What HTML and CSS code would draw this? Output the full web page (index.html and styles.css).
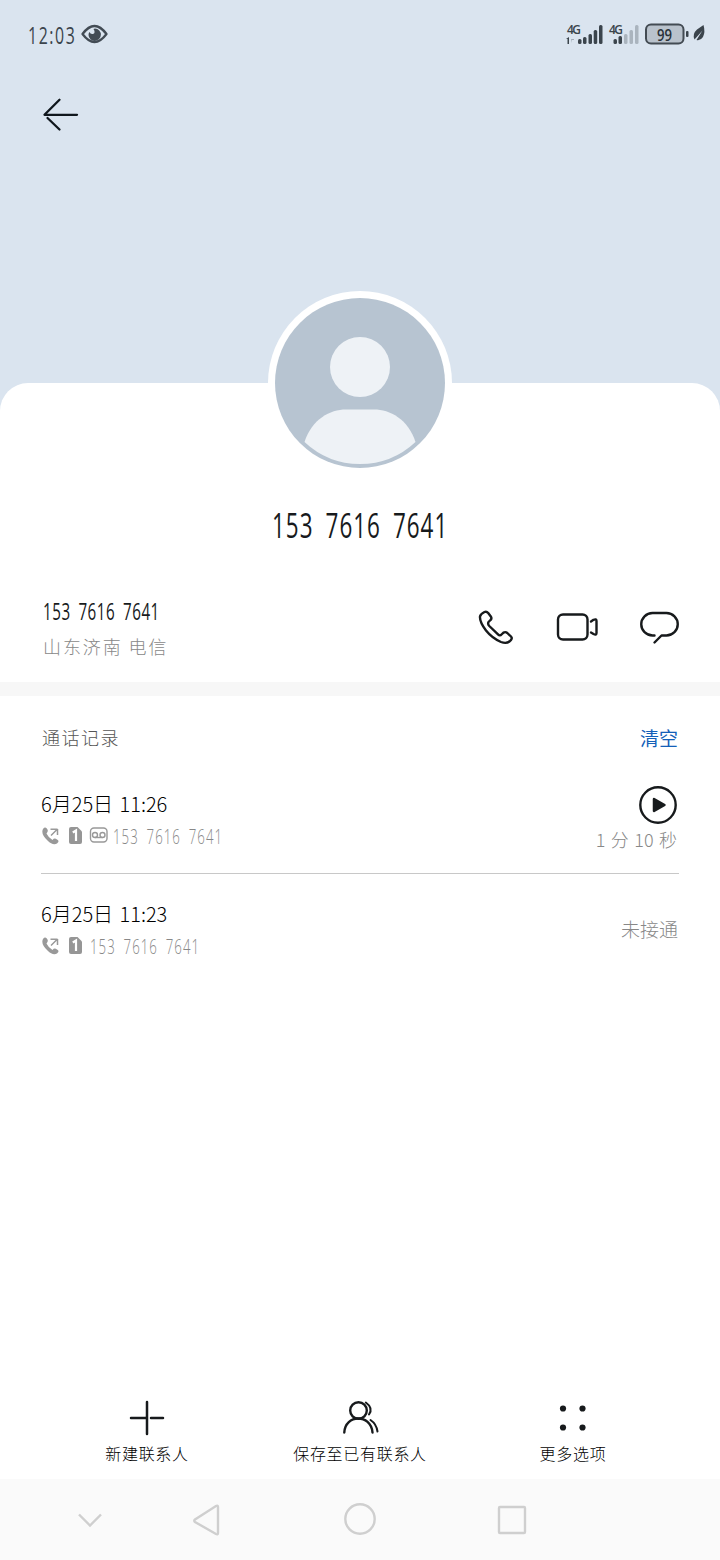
FILE: index.html
```html
<!DOCTYPE html>
<html lang="zh-CN">
<head>
<meta charset="utf-8">
<title>联系人</title>
<link rel="stylesheet" href="styles.css">
</head>
<body>
<div class="screen">
  <header class="hero">
    <div class="status">
      <div class="clock"><span class="digits">12:03</span></div>
      <svg class="eye" width="28" height="20" viewBox="0 0 28 20">
        <path d="M1.500 10Q13.500-6 25.500 10Q13.500 26 1.500 10Z" fill="none" stroke="#424b54" stroke-width="2.300" stroke-linejoin="round"/>
        <path d="M14 4.500a6.200 6.200 0 1 1-6.500 6.500q0-2 1-3q1 2.500 3.300 2Q15 9 12.500 4.900Z" fill="#424b54"/>
      </svg>
      <svg class="signals" width="144" height="28" viewBox="0 0 144 28">
        <g fill="#3b444c">
          <text x="2" y="14" class="network" textLength="14">4G</text>
          <path d="M1 19l3-2v7H2.500v-5z"/>
          <path d="M6 19h3v1H7v3z" opacity=".35"/>
          <rect x="13" y="19" width="3.500" height="5" rx="1.500"/>
          <rect x="18" y="17" width="3.500" height="7" rx="1.500"/>
          <rect x="23.500" y="14" width="3.500" height="10" rx="1.500"/>
          <rect x="28.700" y="10" width="3.500" height="14" rx="1.500"/>
          <rect x="34" y="5" width="3.500" height="19" rx="1.500"/>
          <text x="44" y="14" class="network" textLength="14">4G</text>
          <rect x="48.500" y="19" width="3.500" height="5" rx="1.500"/>
          <rect x="53.500" y="16" width="3.500" height="8" rx="1.500"/>
        </g>
        <g fill="#aab4be">
          <rect x="59" y="14" width="3.500" height="10" rx="1.500"/>
          <rect x="64.500" y="10" width="3.500" height="14" rx="1.500"/>
          <rect x="70" y="5" width="3.500" height="19" rx="1.500"/>
        </g>
        <rect x="81" y="4.500" width="37.500" height="19" rx="5" fill="#b9c2cc" stroke="#434b53" stroke-width="2"/>
        <text x="92" y="20.500" class="level" textLength="15" lengthAdjust="spacingAndGlyphs">99</text>
        <rect x="121" y="11" width="2.500" height="6" rx="1" fill="#3b444c"/>
        <path d="M138.500 5Q140.500 12 138 17Q135.500 21 131.500 20L137.500 10.500L129.500 19.500Q127 14 132 9.500ZM129 22l1-2" fill="#3b444c"/>
      </svg>
    </div>
    <svg class="back" width="40" height="36" viewBox="0 0 40 36">
      <path d="M18.500 2.800L3.500 17.800H36M6.500 21L18.500 32.500" fill="none" stroke="#10171d" stroke-width="2.300" stroke-linecap="round" stroke-linejoin="round"/>
    </svg>
  </header>

  <main class="sheet">
    <svg class="avatar" width="184" height="184" viewBox="0 0 184 184">
      <circle cx="92" cy="92" r="92" fill="#fff"/>
      <circle cx="92" cy="92" r="85" fill="#b7c4d1"/>
      <circle cx="92" cy="76" r="30" fill="#eef2f6"/>
      <path d="M36.500 151C44 128 62 118.500 78 118.500H106C122 118.500 140 128 147.500 151Q124 173 92 173T36.500 151Z" fill="#eef2f6"/>
    </svg>
    <h1 class="name"><span class="digits">153 7616 7641</span></h1>
    <section class="contact">
      <div class="contact-text">
        <div class="phone"><span class="digits">153 7616 7641</span></div>
        <div class="region">山东济南 电信</div>
      </div>
      <svg class="call" width="36" height="36" viewBox="0 0 36 36">
        <path d="M6.500 2Q8.500 1 10.200 3L13 6.700Q14 8.600 12.500 10L10.500 12Q9.500 14 11.300 16L20 24.300Q22 26.300 23.500 24.500L25.500 22.600Q27.500 21.500 29.300 23L33 26.500Q34.500 28 33 30Q29.500 34.500 23 32Q14 28 8 20.500Q1.500 12 2 6.500Q2.500 4 6.500 2Z"/>
      </svg>
      <svg class="video" width="44" height="36" viewBox="0 0 44 36">
        <rect x="3" y="5.500" width="29.500" height="25" rx="5"/>
        <path d="M36 12.500L38.500 10.800Q41.500 9.500 41.500 12V24Q41.500 26.500 38.500 25L36 23.500"/>
      </svg>
      <svg class="message" width="40" height="36" viewBox="0 0 40 36">
        <path d="M15.500 26.500H13.500A11.200 11.200 0 0 1 13.500 4H27.500A11.200 11.200 0 0 1 27.500 26.500H22.500L15.500 33.500"/>
      </svg>
    </section>
    <div class="divider"></div>
    <section class="log">
      <div class="log-head"><h2>通话记录</h2><a class="clear">清空</a></div>
      <article class="entry first">
        <div class="entry-main">
          <div class="date">6月25日 11:26</div>
          <div class="meta">
            <svg class="outgoing" width="20" height="20" viewBox="0 0 20 20"><path d="M2 3Q4.500 0 6.500 3.500Q7.500 5.500 5.500 7.500Q7 11 11.500 14Q13.500 11.500 16 13.500Q19 15 16 17.500Q12 20 6.500 14.500Q-.5 8 2 3Z" fill="#999"/><path d="M10 9.500L16.500 3M9.500 3.200H16.500M16.500 3V9" fill="none" stroke="#999" stroke-width="1.500"/></svg>
            <svg class="sim" width="15" height="20" viewBox="0 0 15 20"><path d="M3 1H9.500L14 5.500V16Q14 18 12 18H3Q1 18 1 16V3Q1 1 3 1Z" fill="#969696"/><path d="M4.800 6.500L8 4.500V15" fill="none" stroke="#fff" stroke-width="2.200"/></svg>
            <svg class="tape" width="20" height="18" viewBox="0 0 20 18" fill="none" stroke="#999" stroke-width="1.400"><rect x="1.500" y="2" width="16.500" height="14" rx="3.500"/><circle cx="6" cy="9" r="2.500"/><circle cx="13.500" cy="9" r="2.500"/><path d="M6 11.500H13.500"/></svg>
            <span class="number"><span class="digits">153 7616 7641</span></span>
          </div>
        </div>
        <div class="entry-side">
          <svg class="play" width="38" height="38" viewBox="0 0 38 38"><circle cx="19" cy="19" r="17.700" fill="none" stroke="#171a1c" stroke-width="2.400"/><path d="M15 13L25.500 19L15 25Z" fill="#171a1c" stroke="#171a1c" stroke-width="2.500" stroke-linejoin="round"/></svg>
          <div class="duration">1 分 10 秒</div>
        </div>
      </article>
      <article class="entry">
        <div class="entry-main">
          <div class="date">6月25日 11:23</div>
          <div class="meta">
            <svg class="outgoing" width="20" height="20" viewBox="0 0 20 20"><path d="M2 3Q4.500 0 6.500 3.500Q7.500 5.500 5.500 7.500Q7 11 11.500 14Q13.500 11.500 16 13.500Q19 15 16 17.500Q12 20 6.500 14.500Q-.5 8 2 3Z" fill="#999"/><path d="M10 9.500L16.500 3M9.500 3.200H16.500M16.500 3V9" fill="none" stroke="#999" stroke-width="1.500"/></svg>
            <svg class="sim" width="15" height="20" viewBox="0 0 15 20"><path d="M3 1H9.500L14 5.500V16Q14 18 12 18H3Q1 18 1 16V3Q1 1 3 1Z" fill="#969696"/><path d="M4.800 6.500L8 4.500V15" fill="none" stroke="#fff" stroke-width="2.200"/></svg>
            <span class="number"><span class="digits">153 7616 7641</span></span>
          </div>
        </div>
        <div class="missed">未接通</div>
      </article>
    </section>
    <footer class="actions">
      <div class="action">
        <svg width="40" height="40" viewBox="0 0 40 40"><path d="M20 4V36M4 20H18.500M24 20H36" fill="none" stroke="#171a1c" stroke-width="2.500" stroke-linecap="round"/></svg>
        <span>新建联系人</span>
      </div>
      <div class="action">
        <svg width="40" height="40" viewBox="0 0 40 40" fill="none" stroke="#171a1c" stroke-width="2.400" stroke-linecap="round"><circle cx="18.500" cy="12.500" r="8.300"/><path d="M4.300 34.500C5 16 31 15.500 32.500 34.500"/><path d="M25.800 4.500Q33.500 10 29 16.500M30.500 22Q36.500 26 37.500 33.500" stroke-width="2"/></svg>
        <span>保存至已有联系人</span>
      </div>
      <div class="action">
        <svg width="40" height="40" viewBox="0 0 40 40" fill="#171a1c"><circle cx="10" cy="10.500" r="3.100"/><circle cx="29.500" cy="10.500" r="3.100"/><circle cx="10" cy="29.500" r="3.100"/><circle cx="29.500" cy="29.500" r="3.100"/></svg>
        <span>更多选项</span>
      </div>
    </footer>
  </main>

  <nav class="nav">
    <svg width="28" height="34" viewBox="0 0 28 34"><path d="M3 11.500L14 22.500L25 11.500"/></svg>
    <svg class="nav-back" width="30" height="34" viewBox="0 0 30 34"><path d="M27 4V30Q27 32 25 31L4 19Q2.500 17.800 4 16.500L25 3Q27 2 27 4Z"/></svg>
    <svg class="nav-home" width="34" height="34" viewBox="0 0 34 34"><circle cx="17" cy="16" r="14.700"/></svg>
    <svg class="nav-recent" width="30" height="34" viewBox="0 0 30 34"><rect x="2" y="4" width="26" height="26" rx="1"/></svg>
  </nav>
</div>
</body>
</html>
```
FILE: styles.css
```css
* { box-sizing: border-box; }
body { margin: 0; font-family: "Noto Sans CJK SC", sans-serif; font-weight: 300; color: #171a1c; }
h1, h2 { margin: 0; font-weight: inherit; }
svg { display: block; flex: none; }
.screen { width: 720px; height: 1560px; display: flex; flex-direction: column; background: #dae4ef; overflow: hidden; }
.digits { display: block; width: max-content; white-space: nowrap; font-family: "Open Sans", sans-serif; transform: scaleX(.66); transform-origin: left center; }

.hero { height: 383px; flex: none; }
.status { display: flex; height: 56px; padding: 20px 11px 0 28px; }
.clock { width: 53px; height: 30px; font-size: 24px; line-height: 30px; font-weight: 400; color: #3b444c; }
.clock .digits { letter-spacing: 2.4px; }
.eye { margin-top: 4px; }
.signals { margin-left: auto; }
.network { font: 600 12px "Open Sans", sans-serif; }
.level { font: 600 17px "Open Sans", sans-serif; fill: #293139; }
.back { margin: 41px 0 0 41px; }

.sheet { flex: none; height: 1096px; display: flex; flex-direction: column; background: #fff; border-radius: 28px 28px 0 0; }
.avatar { margin: -92px auto 0; }
.name { margin: 26px 0 0 272px; height: 48px; font-size: 34px; line-height: 48px; font-weight: 400; }
.name .digits { letter-spacing: 1.5px; word-spacing: 8px; }
.contact { height: 133px; display: flex; align-items: flex-start; padding: 45px 42px 0 43px; }
.contact-text { flex: 1; }
.phone { height: 34px; line-height: 34px; font-size: 23px; font-weight: 400; }
.phone .digits { letter-spacing: .8px; word-spacing: 5px; }
.region { height: 36px; line-height: 36px; font-size: 18px; letter-spacing: 1.9px; color: #888; }
.contact svg { margin-top: 15px; fill: none; stroke: #171a1c; stroke-width: 2.4; stroke-linecap: round; stroke-linejoin: round; }
.contact .call { margin-right: 41px; margin-top: 16px; }
.contact .video { margin-right: 40px; }
.contact .message { margin-right: -1px; }
.divider { height: 14px; flex: none; background: #f7f7f7; }

.log { padding: 0 41px; }
.log-head { display: flex; justify-content: space-between; height: 84px; line-height: 83px; }
.log-head h2 { padding-left: 1px; font-size: 18px; letter-spacing: 1.5px; color: #555; }
.clear { padding-right: 1px; font-size: 19px; color: #1460b8; font-weight: 400; }
.entry { display: flex; justify-content: space-between; height: 112px; }
.entry.first { height: 94px; border-bottom: 1px solid #c8c8c8; }
.entry.first .entry-main { padding-top: 8px; }
.entry-main { padding-top: 24px; }
.date { height: 32px; line-height: 32px; font-size: 20px; color: #000; word-spacing: 2px; }
.meta { display: flex; height: 32px; padding-top: 6px; }
.meta .sim { margin-left: 7px; }
.meta .tape { margin-left: 6px; }
.number { margin-left: 4px; height: 22px; line-height: 22px; font-size: 20px; color: #888; }
.entry:not(.first) .number { margin-left: 7px; }
.number .digits { letter-spacing: 1.6px; word-spacing: 5px; }
.entry-side { display: flex; flex-direction: column; align-items: flex-end; padding: 6px 2px 0 0; }
.duration { height: 34px; line-height: 31px; font-size: 18px; color: #888; word-spacing: 1.5px; }
.missed { padding: 38px 1px 0 0; line-height: 34px; font-size: 19px; color: #888; }

.actions { margin-top: auto; height: 86px; display: flex; justify-content: center; }
.action { width: 213px; display: flex; flex-direction: column; align-items: center; padding-top: 5px; font-size: 16px; line-height: 31px; letter-spacing: .7px; color: #000; }
.action svg { margin-left: -1px; }

.nav { flex: none; height: 81px; display: flex; align-items: flex-start; padding: 24px 0 0 76px; background: #fafafa; }
.nav svg { fill: none; stroke: #cfcfcf; stroke-width: 2.4; }
.nav-back { margin-left: 87px; }
.nav-home { margin-left: 122px; }
.nav-recent { margin-left: 120px; }
```
